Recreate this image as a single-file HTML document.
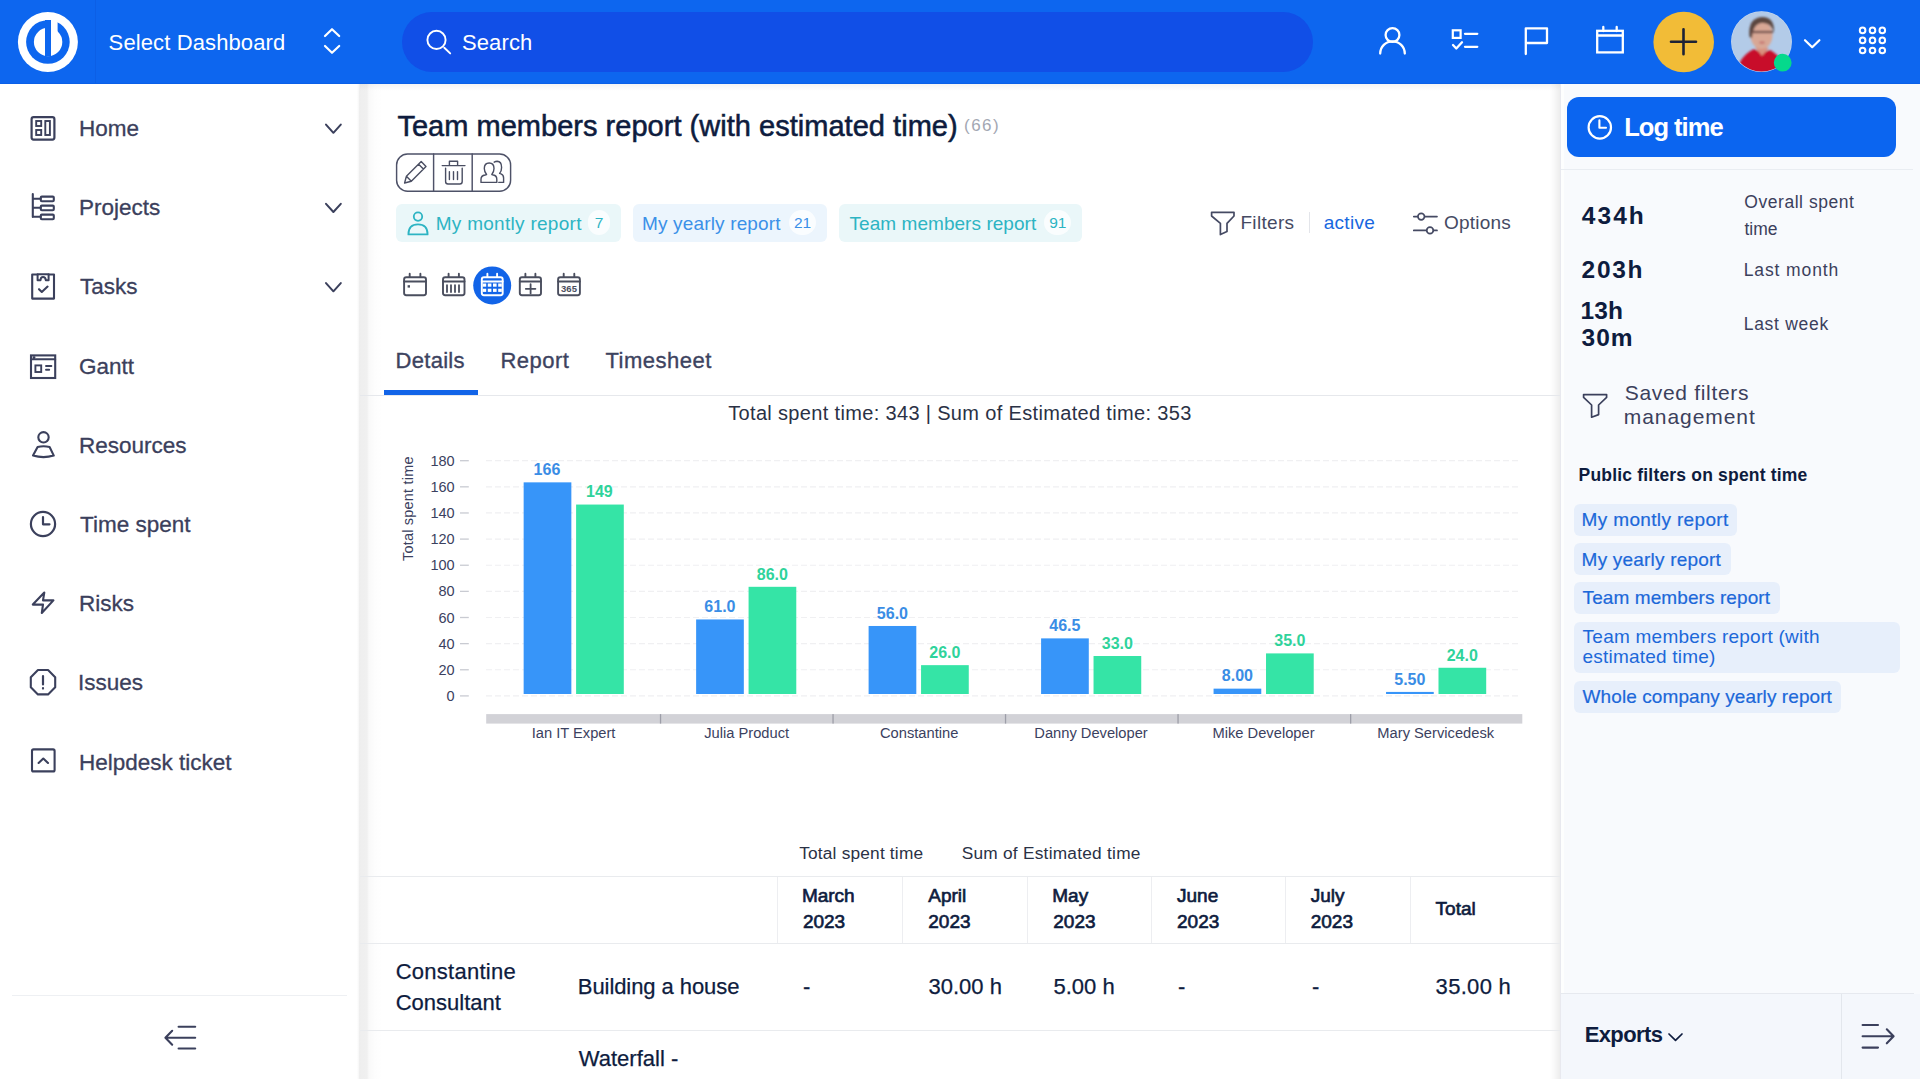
<!DOCTYPE html>
<html><head><meta charset="utf-8"><title>Team members report</title>
<style>
html,body{margin:0;padding:0;width:1920px;height:1079px;overflow:hidden;background:#fff;font-family:"Liberation Sans",sans-serif;}
.t{position:absolute;white-space:nowrap;}
svg{overflow:visible}
</style></head><body>
<div style="position:absolute;left:0px;top:0px;width:1920px;height:84px;background:#0D66EF;"></div>
<div style="position:absolute;left:0px;top:83px;width:1920px;height:1px;background:#0A60E8;"></div>
<div style="position:absolute;left:95px;top:0px;width:1px;height:83px;background:#0C5FE6;"></div>
<div style="position:absolute;left:402px;top:12px;width:911px;height:60px;background:#114FE7;border-radius:30px;"></div>
<div style="position:absolute;left:357px;top:84px;width:2px;height:995px;background:linear-gradient(90deg,rgba(0,0,0,0),rgba(0,0,0,0.04));"></div>
<div style="position:absolute;left:359px;top:84px;width:24px;height:995px;background:linear-gradient(90deg,rgba(0,0,0,0.065) 0px,rgba(0,0,0,0.058) 8px,rgba(0,0,0,0.025) 10px,rgba(0,0,0,0.008) 16px,rgba(0,0,0,0) 24px);"></div>
<div style="position:absolute;left:360px;top:84px;width:1200px;height:7px;background:linear-gradient(180deg,rgba(0,0,0,0.045),rgba(0,0,0,0));"></div>
<div style="position:absolute;left:1560px;top:84px;width:360px;height:995px;background:#F8FAFD;"></div>
<div style="position:absolute;left:1550px;top:84px;width:10px;height:995px;background:linear-gradient(90deg,rgba(0,0,0,0),rgba(0,0,0,0.025) 40%,rgba(0,0,0,0.07));"></div>
<div style="position:absolute;left:1560px;top:84px;width:1px;height:995px;background:#E8E9EF;"></div>
<div style="position:absolute;left:1561px;top:84px;width:3px;height:995px;background:#FDFEFE;"></div>
<div style="position:absolute;left:1561px;top:169px;width:352px;height:1px;background:#E9EDF2;"></div>
<div style="position:absolute;left:1561px;top:994px;width:359px;height:85px;background:#F4F7FC;"></div>
<div style="position:absolute;left:1561px;top:993px;width:353px;height:1px;background:#E6E9EF;"></div>
<div style="position:absolute;left:1841px;top:994px;width:1px;height:85px;background:#E3E7ED;"></div>
<div style="position:absolute;left:12px;top:995px;width:335px;height:1px;background:#EEF0F3;"></div>
<div style="position:absolute;left:360px;top:395px;width:1200px;height:1px;background:#E6E8EC;"></div>
<div style="position:absolute;left:384px;top:390px;width:94px;height:5px;background:#1264E8;"></div>
<div style="position:absolute;left:396px;top:204px;width:225px;height:38px;background:#EAF7F9;border-radius:6px;"></div>
<div style="position:absolute;left:633px;top:204px;width:194px;height:38px;background:#ECF5FD;border-radius:6px;"></div>
<div style="position:absolute;left:839px;top:204px;width:243px;height:38px;background:#EAF7F9;border-radius:6px;"></div>
<div style="position:absolute;left:587.7px;top:210px;width:22px;height:25px;border-radius:13px;background:rgba(255,255,255,0.75);"></div>
<div style="position:absolute;left:788.5px;top:210px;width:27px;height:25px;border-radius:13px;background:rgba(255,255,255,0.75);"></div>
<div style="position:absolute;left:1044.0px;top:210px;width:27px;height:25px;border-radius:13px;background:rgba(255,255,255,0.75);"></div>
<div style="position:absolute;left:1309px;top:212px;width:1px;height:21px;background:#E3E5EA;"></div>
<div style="position:absolute;left:1567px;top:97px;width:329px;height:60px;background:#0B65F0;border-radius:12px;"></div>
<div style="position:absolute;left:1573.5px;top:503.6px;width:163.3px;height:32px;background:#E7EFFB;border-radius:6px;"></div>
<div style="position:absolute;left:1573.5px;top:542.9px;width:157.2px;height:32px;background:#E7EFFB;border-radius:6px;"></div>
<div style="position:absolute;left:1573.5px;top:581.5px;width:206.3px;height:32px;background:#E7EFFB;border-radius:6px;"></div>
<div style="position:absolute;left:1573.5px;top:621.5px;width:326px;height:51.5px;background:#E7EFFB;border-radius:6px;"></div>
<div style="position:absolute;left:1573.5px;top:681px;width:267.7px;height:31.5px;background:#E7EFFB;border-radius:6px;"></div>
<div style="position:absolute;left:360px;top:876px;width:1200px;height:1px;background:#E9EBEE;"></div>
<div style="position:absolute;left:360px;top:943px;width:1200px;height:1px;background:#E9EBEE;"></div>
<div style="position:absolute;left:360px;top:1030px;width:1200px;height:1px;background:#E9EBEE;"></div>
<div style="position:absolute;left:777px;top:877px;width:1px;height:66px;background:#EDEEF1;"></div>
<div style="position:absolute;left:902px;top:877px;width:1px;height:66px;background:#EDEEF1;"></div>
<div style="position:absolute;left:1027px;top:877px;width:1px;height:66px;background:#EDEEF1;"></div>
<div style="position:absolute;left:1151px;top:877px;width:1px;height:66px;background:#EDEEF1;"></div>
<div style="position:absolute;left:1285px;top:877px;width:1px;height:66px;background:#EDEEF1;"></div>
<div style="position:absolute;left:1410px;top:877px;width:1px;height:66px;background:#EDEEF1;"></div>
<div class="t" style="left:412.8px;top:547.6px;font-size:14.5px;line-height:16px;color:#3B4160;transform-origin:0 13px;transform:rotate(-90deg);letter-spacing:0.2px">Total spent time</div>
<svg style="position:absolute;left:0;top:0" width="1920" height="1079"><circle cx="47.9" cy="42" r="30" fill="#fff"/><circle cx="47.9" cy="42" r="21.8" fill="#0D66EF"/><circle cx="48.1" cy="42" r="14.2" fill="#fff"/><rect x="45" y="20" width="6" height="36.5" fill="#0D66EF"/><rect x="51" y="17" width="6.6" height="16" fill="#fff"/><path d="M325 36 L332 29.2 L339.2 36 M325 46 L332 52.8 L339.2 46" fill="none" stroke="#FFFFFF" stroke-width="2.2" stroke-linecap="round" stroke-linejoin="round" /><circle cx="436.5" cy="39.9" r="9.1" fill="none" stroke="#FFFFFF" stroke-width="1.9"/><path d="M444.3 47.7 L450.2 53.4" fill="none" stroke="#FFFFFF" stroke-width="1.9" stroke-linecap="round" stroke-linejoin="round" /><circle cx="1392.5" cy="35" r="6.9" fill="none" stroke="#FFFFFF" stroke-width="2.3"/><path d="M1380.2 53.6 A12.3 12.3 0 0 1 1404.8 53.6" fill="none" stroke="#FFFFFF" stroke-width="2.3" stroke-linecap="round" stroke-linejoin="round" /><rect x="1452.8" y="30.3" width="7.8" height="7.6" fill="none" stroke="#fff" stroke-width="2.2"/><path d="M1465 33.8 H1477.3 M1465 46.8 H1477.3 M1453 45 L1456.3 48.5 L1462 42.3" fill="none" stroke="#FFFFFF" stroke-width="2.3" stroke-linecap="round" stroke-linejoin="round" /><path d="M1525.8 54 V28.3 H1547 V43 H1526.5" fill="none" stroke="#FFFFFF" stroke-width="2.3" stroke-linecap="round" stroke-linejoin="round" stroke-linecap="butt"/><rect x="1597.2" y="30.8" width="25.6" height="21.6" fill="none" stroke="#fff" stroke-width="2.3"/><path d="M1597.2 35.5 H1622.8 M1603.3 27 V31 M1616.7 27 V31" fill="none" stroke="#FFFFFF" stroke-width="2.3" stroke-linecap="round" stroke-linejoin="round" stroke-linecap="butt"/><circle cx="1683.7" cy="42" r="30.3" fill="#F2BC37" stroke="none" stroke-width="0"/><path d="M1671 41.8 H1696 M1683.5 29.2 V54.2" fill="none" stroke="#1D2236" stroke-width="2.6" stroke-linecap="round" stroke-linejoin="round" stroke-linecap="butt"/><defs><clipPath id="av"><circle cx="1761.5" cy="41.7" r="29.9"/></clipPath><filter id="bl" x="-20%" y="-20%" width="140%" height="140%"><feGaussianBlur stdDeviation="1.1"/></filter></defs><circle cx="1761.5" cy="41.7" r="30.4" fill="#C9DAF0"/><g clip-path="url(#av)"><rect x="1730" y="10" width="64" height="64" fill="#B3CBE8"/><g filter="url(#bl)"><path d="M1738 76 L1740 62 Q1745 53 1754 49 L1762 53 L1770 50 Q1778 54 1784 64 L1786 76 Z" fill="#C8102A"/><path d="M1755 47 L1762 56 L1769 48 Z" fill="#D9907E"/><ellipse cx="1761.5" cy="35" rx="11" ry="14" fill="#D8A795"/><path d="M1749.5 37 Q1747.5 18 1762 17 Q1775 17 1774 33 Q1771 22 1762 23 Q1753 23.5 1752 38 Z" fill="#5B4740"/><path d="M1751 32 H1773" stroke="#6B4A45" stroke-width="2.2"/><ellipse cx="1762" cy="42.5" rx="3" ry="1.6" fill="#C97F78"/></g></g><circle cx="1782.7" cy="62.7" r="8.9" fill="#05D98C" stroke="none" stroke-width="0"/><path d="M1805 40.2 L1812.2 47.2 L1819.4 40.2" fill="none" stroke="#FFFFFF" stroke-width="2.2" stroke-linecap="round" stroke-linejoin="round" /><circle cx="1862.6" cy="30.4" r="2.8" fill="none" stroke="#FFFFFF" stroke-width="2.0"/><circle cx="1862.6" cy="40.4" r="2.8" fill="none" stroke="#FFFFFF" stroke-width="2.0"/><circle cx="1862.6" cy="50.5" r="2.8" fill="none" stroke="#FFFFFF" stroke-width="2.0"/><circle cx="1872.5" cy="30.4" r="2.8" fill="none" stroke="#FFFFFF" stroke-width="2.0"/><circle cx="1872.5" cy="40.4" r="2.8" fill="none" stroke="#FFFFFF" stroke-width="2.0"/><circle cx="1872.5" cy="50.5" r="2.8" fill="none" stroke="#FFFFFF" stroke-width="2.0"/><circle cx="1882.3" cy="30.4" r="2.8" fill="none" stroke="#FFFFFF" stroke-width="2.0"/><circle cx="1882.3" cy="40.4" r="2.8" fill="none" stroke="#FFFFFF" stroke-width="2.0"/><circle cx="1882.3" cy="50.5" r="2.8" fill="none" stroke="#FFFFFF" stroke-width="2.0"/><rect x="31.6" y="117.2" width="22.8" height="22.4" rx="2" fill="none" stroke="#3B405C" stroke-width="2.2"/><rect x="36.2" y="121" width="5" height="5" fill="none" stroke="#3B405C" stroke-width="1.9"/><rect x="36.2" y="130" width="5" height="5" fill="none" stroke="#3B405C" stroke-width="1.9"/><rect x="45.3" y="121" width="4.6" height="14" fill="none" stroke="#3B405C" stroke-width="1.9"/><path d="M32.8 194 V217 M32.8 198.8 H40.5 M32.8 207.8 H40.5 M32.8 216.8 H40.5" fill="none" stroke="#3B405C" stroke-width="2.1" stroke-linecap="round" stroke-linejoin="round" stroke-linecap="butt"/><rect x="40.8" y="196.6" width="13" height="4.599999999999994" rx="1" fill="none" stroke="#3B405C" stroke-width="2.1"/><rect x="40.8" y="205.6" width="13" height="4.599999999999994" rx="1" fill="none" stroke="#3B405C" stroke-width="2.1"/><rect x="40.8" y="214.6" width="13" height="4.599999999999994" rx="1" fill="none" stroke="#3B405C" stroke-width="2.1"/><path d="M37.5 274.5 H32.2 V298.6 H54 V274.5 H48.7" fill="none" stroke="#3B405C" stroke-width="2.1" stroke-linecap="round" stroke-linejoin="round" /><path d="M37.6 274.3 V280.2 H40.5 Q40.7 277 43 277 Q45.5 277 45.8 280.2 H48.6 V274.3 Z" fill="none" stroke="#3B405C" stroke-width="2" stroke-linecap="round" stroke-linejoin="round" /><path d="M39 289.2 L41.8 292 L47.6 286.6" fill="none" stroke="#3B405C" stroke-width="2.1" stroke-linecap="round" stroke-linejoin="round" /><rect x="31" y="355.4" width="24.2" height="22.6" fill="none" stroke="#3B405C" stroke-width="2.1"/><path d="M31 359.2 H55.2 M33.5 357.3 H34.5" fill="none" stroke="#3B405C" stroke-width="2" stroke-linecap="round" stroke-linejoin="round" /><rect x="35.4" y="365.4" width="5.8" height="6.6" fill="none" stroke="#3B405C" stroke-width="1.9"/><path d="M46 366 H51.4 M46 369.8 H49.2" fill="none" stroke="#3B405C" stroke-width="1.9" stroke-linecap="round" stroke-linejoin="round" /><circle cx="43.5" cy="437.3" r="5.2" fill="none" stroke="#3B405C" stroke-width="2.1"/><path d="M37.6 447 Q43.5 445.4 49.6 447 L53.8 455.6 Q43.5 458.6 33 455.6 Z" fill="none" stroke="#3B405C" stroke-width="2.1" stroke-linecap="round" stroke-linejoin="round" /><circle cx="43" cy="524" r="12.1" fill="none" stroke="#3B405C" stroke-width="2.2"/><path d="M43 517 V524.3 H49.5" fill="none" stroke="#3B405C" stroke-width="2.2" stroke-linecap="round" stroke-linejoin="round" /><path d="M44.3 592.6 L43 600.4 L53.4 600.4 L41.8 613 L43 604.6 L32.8 604.6 Z" fill="none" stroke="#3B405C" stroke-width="2.1" stroke-linecap="round" stroke-linejoin="round" /><path d="M55.20 687.25 L48.05 694.40 L37.95 694.40 L30.80 687.25 L30.80 677.15 L37.95 670.00 L48.05 670.00 L55.20 677.15 Z" fill="none" stroke="#3B405C" stroke-width="2.1" stroke-linecap="round" stroke-linejoin="round" /><path d="M43 676 V684.5 M43 688.2 V688.6" fill="none" stroke="#3B405C" stroke-width="2.2" stroke-linecap="round" stroke-linejoin="round" /><rect x="32" y="749.4" width="22.6" height="22" rx="1.5" fill="none" stroke="#3B405C" stroke-width="2.1"/><path d="M38.6 763 L43.3 758.5 L48 763" fill="none" stroke="#3B405C" stroke-width="2.1" stroke-linecap="round" stroke-linejoin="round" /><path d="M326 124.60000000000001 L333.4 132.8 L340.8 124.60000000000001" fill="none" stroke="#3B405C" stroke-width="2" stroke-linecap="round" stroke-linejoin="round" /><path d="M326 203.8 L333.4 212 L340.8 203.8" fill="none" stroke="#3B405C" stroke-width="2" stroke-linecap="round" stroke-linejoin="round" /><path d="M326 283.1 L333.4 291.3 L340.8 283.1" fill="none" stroke="#3B405C" stroke-width="2" stroke-linecap="round" stroke-linejoin="round" /><path d="M178.6 1026.8 H195.2 M165.6 1037.8 H195.2 M178.6 1048.5 H195.2 M172.2 1030.8 L165.4 1037.8 L172.2 1044.7" fill="none" stroke="#3B405C" stroke-width="2.1" stroke-linecap="round" stroke-linejoin="round" /><rect x="396.6" y="154" width="114" height="37.3" rx="11" fill="none" stroke="#4E5268" stroke-width="1.45"/><path d="M433.6 154 V191.3 M472.2 154 V191.3" fill="none" stroke="#4E5268" stroke-width="1.45" stroke-linecap="round" stroke-linejoin="round" stroke-linecap="butt"/><path d="M404.6 183 L406.4 176.3 L421.2 161.6 L426 166.4 L411.3 181.2 Z M406.4 176.3 L411.3 181.2 M418.6 164.2 L423.4 169" fill="none" stroke="#4A4E62" stroke-width="1.4" stroke-linecap="round" stroke-linejoin="round" /><path d="M442.2 165.6 H465 M449.4 165.4 V161.3 H457.6 V165.4 M445.6 168.3 V181.5 Q445.6 184 448 184 H459.8 Q462.2 184 462.2 181.5 V168.3 M449.4 171.6 V179.6 M453.5 171.6 V179.6 M457.5 171.6 V179.6" fill="none" stroke="#4A4E62" stroke-width="1.4" stroke-linecap="round" stroke-linejoin="round" stroke-linecap="butt"/><path d="M481 182.4 V179.2 Q481 175.6 485 175 L486.6 174.5 Q484.3 172 484.3 168.6 Q484.3 163 489.2 163 Q494 163 494 168.6 Q494 172 491.8 174.5 L493.4 175 Q496.8 175.6 496.8 179.2 V182.4 Z" fill="none" stroke="#4A4E62" stroke-width="1.4" stroke-linecap="round" stroke-linejoin="round" /><path d="M494.2 162.2 Q495.6 161.3 497.2 161.3 Q501.6 161.5 501.6 167.4 Q501.6 171 499.6 173.4 L501 173.9 Q503.6 174.8 503.6 178 V182.4 H498.8" fill="none" stroke="#4A4E62" stroke-width="1.4" stroke-linecap="round" stroke-linejoin="round" /><circle cx="418" cy="216.6" r="4.2" fill="none" stroke="#2DB4C3" stroke-width="1.8"/><path d="M408.4 234.4 Q408.4 224.4 418 224.4 Q427.6 224.4 427.6 234.4 Z" fill="none" stroke="#2DB4C3" stroke-width="1.8" stroke-linecap="round" stroke-linejoin="round" /><path d="M1211.6 212.3 H1234 V216 L1227 223.4 V231.6 L1220.4 234.6 V223.4 L1211.6 216 Z" fill="none" stroke="#454A63" stroke-width="1.7" stroke-linecap="round" stroke-linejoin="round" /><circle cx="1421.2" cy="216.6" r="3.3" fill="none" stroke="#454A63" stroke-width="1.7"/><circle cx="1430" cy="230.4" r="3.3" fill="none" stroke="#454A63" stroke-width="1.7"/><path d="M1413.8 216.6 H1417.6 M1425 216.6 H1437 M1413.8 230.4 H1426.4 M1433.6 230.4 H1437" fill="none" stroke="#454A63" stroke-width="1.7" stroke-linecap="round" stroke-linejoin="round" /><rect x="404.1" y="277.2" width="21.899999999999977" height="18" rx="2.2" fill="none" stroke="#4A4E5E" stroke-width="1.9"/><path d="M404.1 281.5 H426 M409.70000000000005 273.8 V277 M420.4 273.8 V277" fill="none" stroke="#4A4E5E" stroke-width="1.9" stroke-linecap="round" stroke-linejoin="round" stroke-linecap="butt"/><rect x="407.6" y="285.2" width="2.4" height="2.4" fill="#4A4E5E"/><rect x="443" y="277.2" width="21.5" height="18" rx="2.2" fill="none" stroke="#4A4E5E" stroke-width="1.9"/><path d="M443 281.5 H464.5 M448.6 273.8 V277 M458.9 273.8 V277" fill="none" stroke="#4A4E5E" stroke-width="1.9" stroke-linecap="round" stroke-linejoin="round" stroke-linecap="butt"/><path d="M447 285.2 V292 M451 285.2 V292 M455 285.2 V292 M459 285.2 V292" fill="none" stroke="#4A4E5E" stroke-width="1.8" stroke-linecap="round" stroke-linejoin="round" stroke-linecap="butt"/><circle cx="492.2" cy="285.4" r="19" fill="#1264E8" stroke="none" stroke-width="0"/><rect x="481.8" y="277.2" width="20.899999999999977" height="18" rx="2.2" fill="none" stroke="#FFFFFF" stroke-width="1.9"/><path d="M481.8 281.5 H502.7 M487.40000000000003 273.8 V277 M497.09999999999997 273.8 V277" fill="none" stroke="#FFFFFF" stroke-width="1.9" stroke-linecap="round" stroke-linejoin="round" stroke-linecap="butt"/><rect x="482.6" y="283.5" width="3.6" height="3.2" fill="#fff"/><rect x="482.6" y="288.7" width="3.6" height="3.2" fill="#fff"/><rect x="487.8" y="283.5" width="3.6" height="3.2" fill="#fff"/><rect x="487.8" y="288.7" width="3.6" height="3.2" fill="#fff"/><rect x="493.0" y="283.5" width="3.6" height="3.2" fill="#fff"/><rect x="493.0" y="288.7" width="3.6" height="3.2" fill="#fff"/><rect x="498.2" y="283.5" width="3.6" height="3.2" fill="#fff"/><rect x="498.2" y="288.7" width="3.6" height="3.2" fill="#fff"/><rect x="519.8" y="277.2" width="21.200000000000045" height="18" rx="2.2" fill="none" stroke="#4A4E5E" stroke-width="1.9"/><path d="M519.8 281.5 H541 M525.4 273.8 V277 M535.4 273.8 V277" fill="none" stroke="#4A4E5E" stroke-width="1.9" stroke-linecap="round" stroke-linejoin="round" stroke-linecap="butt"/><path d="M525.8 288.8 H535.4 M530.6 284.2 V293.4" fill="none" stroke="#4A4E5E" stroke-width="1.8" stroke-linecap="round" stroke-linejoin="round" /><rect x="558.1" y="277.2" width="21.799999999999955" height="18" rx="2.2" fill="none" stroke="#4A4E5E" stroke-width="1.9"/><path d="M558.1 281.5 H579.9 M563.7 273.8 V277 M574.3 273.8 V277" fill="none" stroke="#4A4E5E" stroke-width="1.9" stroke-linecap="round" stroke-linejoin="round" stroke-linecap="butt"/><text x="569" y="292" font-family="Liberation Sans" font-weight="700" font-size="9.5" text-anchor="middle" fill="#4A4E5E">365</text><circle cx="1599.8" cy="127.4" r="11.2" fill="none" stroke="#FFFFFF" stroke-width="2.2"/><path d="M1599.4 120.4 V127.8 H1606" fill="none" stroke="#FFFFFF" stroke-width="2.1" stroke-linecap="round" stroke-linejoin="round" /><path d="M1583.6 394.6 H1606.6 V397.4 L1598.6 405 V414.6 L1591.6 417.2 V405 L1583.6 397.4 Z" fill="none" stroke="#3B405C" stroke-width="1.7" stroke-linecap="round" stroke-linejoin="round" /><path d="M1669 1034 L1675.5 1040.4 L1682 1034" fill="none" stroke="#0E1C3E" stroke-width="1.7" stroke-linecap="round" stroke-linejoin="round" /><path d="M1862.6 1025 H1878 M1862.6 1036.3 H1893.4 M1862.6 1047.6 H1878 M1886.8 1029.3 L1893.6 1036.3 L1886.8 1043.3" fill="none" stroke="#3B405C" stroke-width="2.1" stroke-linecap="round" stroke-linejoin="round" /><line x1="486" y1="695.91" x2="1519" y2="695.91" stroke="#F0F0F2" stroke-width="1.2" stroke-dasharray="6 3"/><line x1="460" y1="695.91" x2="468.8" y2="695.91" stroke="#C9CBD2" stroke-width="1.3"/><line x1="486" y1="669.77" x2="1519" y2="669.77" stroke="#F0F0F2" stroke-width="1.2" stroke-dasharray="6 3"/><line x1="460" y1="669.77" x2="468.8" y2="669.77" stroke="#C9CBD2" stroke-width="1.3"/><line x1="486" y1="643.64" x2="1519" y2="643.64" stroke="#F0F0F2" stroke-width="1.2" stroke-dasharray="6 3"/><line x1="460" y1="643.64" x2="468.8" y2="643.64" stroke="#C9CBD2" stroke-width="1.3"/><line x1="486" y1="617.50" x2="1519" y2="617.50" stroke="#F0F0F2" stroke-width="1.2" stroke-dasharray="6 3"/><line x1="460" y1="617.50" x2="468.8" y2="617.50" stroke="#C9CBD2" stroke-width="1.3"/><line x1="486" y1="591.37" x2="1519" y2="591.37" stroke="#F0F0F2" stroke-width="1.2" stroke-dasharray="6 3"/><line x1="460" y1="591.37" x2="468.8" y2="591.37" stroke="#C9CBD2" stroke-width="1.3"/><line x1="486" y1="565.24" x2="1519" y2="565.24" stroke="#F0F0F2" stroke-width="1.2" stroke-dasharray="6 3"/><line x1="460" y1="565.24" x2="468.8" y2="565.24" stroke="#C9CBD2" stroke-width="1.3"/><line x1="486" y1="539.10" x2="1519" y2="539.10" stroke="#F0F0F2" stroke-width="1.2" stroke-dasharray="6 3"/><line x1="460" y1="539.10" x2="468.8" y2="539.10" stroke="#C9CBD2" stroke-width="1.3"/><line x1="486" y1="512.97" x2="1519" y2="512.97" stroke="#F0F0F2" stroke-width="1.2" stroke-dasharray="6 3"/><line x1="460" y1="512.97" x2="468.8" y2="512.97" stroke="#C9CBD2" stroke-width="1.3"/><line x1="486" y1="486.83" x2="1519" y2="486.83" stroke="#F0F0F2" stroke-width="1.2" stroke-dasharray="6 3"/><line x1="460" y1="486.83" x2="468.8" y2="486.83" stroke="#C9CBD2" stroke-width="1.3"/><line x1="486" y1="460.70" x2="1519" y2="460.70" stroke="#F0F0F2" stroke-width="1.2" stroke-dasharray="6 3"/><line x1="460" y1="460.70" x2="468.8" y2="460.70" stroke="#C9CBD2" stroke-width="1.3"/><rect x="523.65" y="482.35" width="47.7" height="211.65" fill="#3795F9"/><rect x="576.10" y="504.55" width="47.7" height="189.45" fill="#35E4A6"/><rect x="696.13" y="619.45" width="47.7" height="74.55" fill="#3795F9"/><rect x="748.58" y="586.81" width="47.7" height="107.19" fill="#35E4A6"/><rect x="868.61" y="625.98" width="47.7" height="68.02" fill="#3795F9"/><rect x="921.06" y="665.15" width="47.7" height="28.85" fill="#35E4A6"/><rect x="1041.09" y="638.38" width="47.7" height="55.62" fill="#3795F9"/><rect x="1093.54" y="656.01" width="47.7" height="37.99" fill="#35E4A6"/><rect x="1213.57" y="688.65" width="47.7" height="5.35" fill="#3795F9"/><rect x="1266.02" y="653.40" width="47.7" height="40.60" fill="#35E4A6"/><rect x="1386.05" y="691.92" width="47.7" height="2.08" fill="#3795F9"/><rect x="1438.50" y="667.76" width="47.7" height="26.24" fill="#35E4A6"/><rect x="486.2" y="714.1" width="1036.1" height="9.5" fill="#D2D2D7"/><rect x="659.90" y="714.1" width="1.3" height="9.5" fill="#9D9EA8"/><rect x="832.40" y="714.1" width="1.3" height="9.5" fill="#9D9EA8"/><rect x="1004.90" y="714.1" width="1.3" height="9.5" fill="#9D9EA8"/><rect x="1177.40" y="714.1" width="1.3" height="9.5" fill="#9D9EA8"/><rect x="1350.00" y="714.1" width="1.3" height="9.5" fill="#9D9EA8"/></svg>
<div class="t" style="left:108.60px;top:29.60px;font-size:22px;line-height:25px;color:#FFFFFF;letter-spacing:0.117px;">Select Dashboard</div>
<div class="t" style="left:462.00px;top:30.00px;font-size:22px;line-height:25px;color:#FFFFFF;letter-spacing:0.106px;">Search</div>
<div class="t" style="left:79.00px;top:115.90px;font-size:22.5px;line-height:25px;color:#3B405C;-webkit-text-stroke:0.3px #3B405C;">Home</div>
<div class="t" style="left:79.00px;top:194.50px;font-size:22.5px;line-height:25px;color:#3B405C;-webkit-text-stroke:0.3px #3B405C;">Projects</div>
<div class="t" style="left:80.00px;top:273.90px;font-size:22.5px;line-height:25px;color:#3B405C;-webkit-text-stroke:0.3px #3B405C;">Tasks</div>
<div class="t" style="left:79.00px;top:353.50px;font-size:22.5px;line-height:25px;color:#3B405C;-webkit-text-stroke:0.3px #3B405C;">Gantt</div>
<div class="t" style="left:79.00px;top:433.00px;font-size:22.5px;line-height:25px;color:#3B405C;-webkit-text-stroke:0.3px #3B405C;">Resources</div>
<div class="t" style="left:80.00px;top:512.00px;font-size:22.5px;line-height:25px;color:#3B405C;-webkit-text-stroke:0.3px #3B405C;">Time spent</div>
<div class="t" style="left:79.00px;top:591.00px;font-size:22.5px;line-height:25px;color:#3B405C;-webkit-text-stroke:0.3px #3B405C;">Risks</div>
<div class="t" style="left:78.00px;top:670.00px;font-size:22.5px;line-height:25px;color:#3B405C;-webkit-text-stroke:0.3px #3B405C;">Issues</div>
<div class="t" style="left:79.00px;top:749.50px;font-size:22.5px;line-height:25px;color:#3B405C;-webkit-text-stroke:0.3px #3B405C;">Helpdesk ticket</div>
<div class="t" style="left:397.40px;top:110.10px;font-size:29px;line-height:32px;color:#0E1C3E;letter-spacing:0.026px;-webkit-text-stroke:0.55px #0E1C3E;">Team members report (with estimated time)</div>
<div class="t" style="left:964.00px;top:116.00px;font-size:17px;line-height:19px;color:#A3A7B3;letter-spacing:1.477px;">(66)</div>
<div class="t" style="left:435.70px;top:212.50px;font-size:19px;line-height:21px;color:#2DB4C3;letter-spacing:0.287px;">My montly report</div>
<div class="t" style="left:642.00px;top:212.50px;font-size:19px;line-height:21px;color:#3B90E8;letter-spacing:0.159px;">My yearly report</div>
<div class="t" style="left:849.50px;top:212.50px;font-size:19px;line-height:21px;color:#2DB4C3;letter-spacing:0.052px;">Team members report</div>
<div class="t" style="left:594.70px;top:213.80px;font-size:15.5px;line-height:17px;color:#2DB4C3;">7</div>
<div class="t" style="left:793.99px;top:213.80px;font-size:15.5px;line-height:17px;color:#3B90E8;">21</div>
<div class="t" style="left:1049.19px;top:213.80px;font-size:15.5px;line-height:17px;color:#2DB4C3;">91</div>
<div class="t" style="left:1240.40px;top:212.00px;font-size:19px;line-height:21px;color:#454A63;letter-spacing:0.330px;">Filters</div>
<div class="t" style="left:1323.70px;top:212.00px;font-size:19px;line-height:21px;color:#1767E0;letter-spacing:0.287px;">active</div>
<div class="t" style="left:1444.00px;top:212.00px;font-size:19px;line-height:21px;color:#454A63;letter-spacing:0.203px;">Options</div>
<div class="t" style="left:395.60px;top:348.00px;font-size:22px;line-height:25px;color:#3D4360;letter-spacing:0.276px;-webkit-text-stroke:0.35px #3D4360;">Details</div>
<div class="t" style="left:500.50px;top:348.00px;font-size:22px;line-height:25px;color:#3D4360;letter-spacing:0.476px;-webkit-text-stroke:0.35px #3D4360;">Report</div>
<div class="t" style="left:605.40px;top:348.00px;font-size:22px;line-height:25px;color:#3D4360;letter-spacing:0.515px;-webkit-text-stroke:0.35px #3D4360;">Timesheet</div>
<div class="t" style="left:1624.20px;top:113.00px;font-size:25.5px;line-height:28px;color:#FFFFFF;font-weight:700;letter-spacing:-0.981px;">Log time</div>
<div class="t" style="left:1581.80px;top:202.30px;font-size:24.5px;line-height:27px;color:#0E1C3E;font-weight:700;letter-spacing:2.041px;">434h</div>
<div class="t" style="left:1744.30px;top:192.30px;font-size:17.5px;line-height:20px;color:#3B405C;letter-spacing:0.547px;">Overall spent</div>
<div class="t" style="left:1744.50px;top:218.70px;font-size:17.5px;line-height:20px;color:#3B405C;">time</div>
<div class="t" style="left:1581.60px;top:256.40px;font-size:24.5px;line-height:27px;color:#0E1C3E;font-weight:700;letter-spacing:1.708px;">203h</div>
<div class="t" style="left:1743.70px;top:259.60px;font-size:17.5px;line-height:20px;color:#3B405C;letter-spacing:0.884px;">Last month</div>
<div class="t" style="left:1580.60px;top:296.75px;font-size:24.5px;line-height:27px;color:#0E1C3E;font-weight:700;letter-spacing:0.024px;">13h</div>
<div class="t" style="left:1581.60px;top:324.00px;font-size:24.5px;line-height:27px;color:#0E1C3E;font-weight:700;letter-spacing:0.974px;">30m</div>
<div class="t" style="left:1743.70px;top:313.60px;font-size:17.5px;line-height:20px;color:#3B405C;letter-spacing:0.720px;">Last week</div>
<div class="t" style="left:1624.70px;top:381.30px;font-size:21px;line-height:23px;color:#3B405C;letter-spacing:0.687px;">Saved filters</div>
<div class="t" style="left:1623.70px;top:404.80px;font-size:21px;line-height:23px;color:#3B405C;letter-spacing:0.951px;">management</div>
<div class="t" style="left:1578.60px;top:464.80px;font-size:17.5px;line-height:20px;color:#0E1C3E;font-weight:700;letter-spacing:0.188px;">Public filters on spent time</div>
<div class="t" style="left:1581.60px;top:508.70px;font-size:19px;line-height:21px;color:#1C68D9;letter-spacing:0.347px;-webkit-text-stroke:0.2px #1C68D9;">My montly report</div>
<div class="t" style="left:1581.60px;top:548.50px;font-size:19px;line-height:21px;color:#1C68D9;letter-spacing:0.205px;-webkit-text-stroke:0.2px #1C68D9;">My yearly report</div>
<div class="t" style="left:1582.60px;top:586.60px;font-size:19px;line-height:21px;color:#1C68D9;letter-spacing:0.086px;-webkit-text-stroke:0.2px #1C68D9;">Team members report</div>
<div class="t" style="left:1582.60px;top:686.00px;font-size:19px;line-height:21px;color:#1C68D9;letter-spacing:0.084px;-webkit-text-stroke:0.2px #1C68D9;">Whole company yearly report</div>
<div class="t" style="left:1582.60px;top:625.90px;font-size:19px;line-height:21px;color:#1C68D9;letter-spacing:0.239px;">Team members report (with</div>
<div class="t" style="left:1582.60px;top:646.20px;font-size:19px;line-height:21px;color:#1C68D9;letter-spacing:0.204px;">estimated time)</div>
<div class="t" style="left:1584.70px;top:1022.30px;font-size:22px;line-height:25px;color:#0E1C3E;font-weight:700;letter-spacing:-0.612px;">Exports</div>
<div class="t" style="left:728.20px;top:401.70px;font-size:20px;line-height:22px;color:#2A3145;letter-spacing:0.339px;">Total spent time: 343 | Sum of Estimated time: 353</div>
<div class="t" style="left:799.20px;top:843.20px;font-size:17.3px;line-height:20px;color:#2A3145;letter-spacing:0.192px;">Total spent time</div>
<div class="t" style="left:961.70px;top:843.20px;font-size:17.3px;line-height:20px;color:#2A3145;letter-spacing:0.244px;">Sum of Estimated time</div>
<div class="t" style="left:801.90px;top:884.90px;font-size:19px;line-height:21px;color:#0E1C3E;-webkit-text-stroke:0.65px #0E1C3E;">March</div>
<div class="t" style="left:802.90px;top:910.50px;font-size:19px;line-height:21px;color:#0E1C3E;-webkit-text-stroke:0.65px #0E1C3E;">2023</div>
<div class="t" style="left:928.30px;top:884.90px;font-size:19px;line-height:21px;color:#0E1C3E;-webkit-text-stroke:0.65px #0E1C3E;">April</div>
<div class="t" style="left:928.30px;top:910.50px;font-size:19px;line-height:21px;color:#0E1C3E;-webkit-text-stroke:0.65px #0E1C3E;">2023</div>
<div class="t" style="left:1052.30px;top:884.90px;font-size:19px;line-height:21px;color:#0E1C3E;-webkit-text-stroke:0.65px #0E1C3E;">May</div>
<div class="t" style="left:1053.30px;top:910.50px;font-size:19px;line-height:21px;color:#0E1C3E;-webkit-text-stroke:0.65px #0E1C3E;">2023</div>
<div class="t" style="left:1177.00px;top:884.90px;font-size:19px;line-height:21px;color:#0E1C3E;-webkit-text-stroke:0.65px #0E1C3E;">June</div>
<div class="t" style="left:1177.00px;top:910.50px;font-size:19px;line-height:21px;color:#0E1C3E;-webkit-text-stroke:0.65px #0E1C3E;">2023</div>
<div class="t" style="left:1310.70px;top:884.90px;font-size:19px;line-height:21px;color:#0E1C3E;-webkit-text-stroke:0.65px #0E1C3E;">July</div>
<div class="t" style="left:1310.70px;top:910.50px;font-size:19px;line-height:21px;color:#0E1C3E;-webkit-text-stroke:0.65px #0E1C3E;">2023</div>
<div class="t" style="left:1435.60px;top:897.90px;font-size:19px;line-height:21px;color:#0E1C3E;-webkit-text-stroke:0.65px #0E1C3E;">Total</div>
<div class="t" style="left:395.70px;top:959.20px;font-size:22px;line-height:25px;color:#0E1C3E;letter-spacing:0.252px;-webkit-text-stroke:0.25px #0E1C3E;">Constantine</div>
<div class="t" style="left:395.70px;top:990.00px;font-size:22px;line-height:25px;color:#0E1C3E;-webkit-text-stroke:0.25px #0E1C3E;">Consultant</div>
<div class="t" style="left:577.80px;top:974.00px;font-size:22px;line-height:25px;color:#0E1C3E;letter-spacing:-0.070px;-webkit-text-stroke:0.25px #0E1C3E;">Building a house</div>
<div class="t" style="left:803.00px;top:974.00px;font-size:22px;line-height:25px;color:#0E1C3E;-webkit-text-stroke:0.25px #0E1C3E;">-</div>
<div class="t" style="left:928.50px;top:974.00px;font-size:22px;line-height:25px;color:#0E1C3E;-webkit-text-stroke:0.25px #0E1C3E;">30.00 h</div>
<div class="t" style="left:1053.50px;top:974.00px;font-size:22px;line-height:25px;color:#0E1C3E;-webkit-text-stroke:0.25px #0E1C3E;">5.00 h</div>
<div class="t" style="left:1178.00px;top:974.00px;font-size:22px;line-height:25px;color:#0E1C3E;-webkit-text-stroke:0.25px #0E1C3E;">-</div>
<div class="t" style="left:1312.00px;top:974.00px;font-size:22px;line-height:25px;color:#0E1C3E;-webkit-text-stroke:0.25px #0E1C3E;">-</div>
<div class="t" style="left:1435.60px;top:974.40px;font-size:22px;line-height:25px;color:#0E1C3E;letter-spacing:0.306px;-webkit-text-stroke:0.25px #0E1C3E;">35.00 h</div>
<div class="t" style="left:578.80px;top:1046.20px;font-size:22px;line-height:25px;color:#0E1C3E;-webkit-text-stroke:0.25px #0E1C3E;">Waterfall -</div>
<div class="t" style="left:446.60px;top:687.91px;font-size:14.5px;line-height:16px;color:#3B4160;">0</div>
<div class="t" style="left:438.54px;top:661.77px;font-size:14.5px;line-height:16px;color:#3B4160;">20</div>
<div class="t" style="left:438.54px;top:635.64px;font-size:14.5px;line-height:16px;color:#3B4160;">40</div>
<div class="t" style="left:438.54px;top:609.50px;font-size:14.5px;line-height:16px;color:#3B4160;">60</div>
<div class="t" style="left:438.54px;top:583.37px;font-size:14.5px;line-height:16px;color:#3B4160;">80</div>
<div class="t" style="left:430.47px;top:557.24px;font-size:14.5px;line-height:16px;color:#3B4160;">100</div>
<div class="t" style="left:430.47px;top:531.10px;font-size:14.5px;line-height:16px;color:#3B4160;">120</div>
<div class="t" style="left:430.47px;top:504.97px;font-size:14.5px;line-height:16px;color:#3B4160;">140</div>
<div class="t" style="left:430.47px;top:478.83px;font-size:14.5px;line-height:16px;color:#3B4160;">160</div>
<div class="t" style="left:430.47px;top:452.70px;font-size:14.5px;line-height:16px;color:#3B4160;">180</div>
<div class="t" style="left:533.60px;top:461.15px;font-size:16px;line-height:17px;color:#3A8DE5;font-weight:700;">166</div>
<div class="t" style="left:586.05px;top:483.35px;font-size:16px;line-height:17px;color:#2FD39B;font-weight:700;">149</div>
<div class="t" style="left:531.65px;top:725.40px;font-size:14.7px;line-height:16px;color:#3B4160;">Ian IT Expert</div>
<div class="t" style="left:704.36px;top:598.25px;font-size:16px;line-height:17px;color:#3A8DE5;font-weight:700;">61.0</div>
<div class="t" style="left:756.81px;top:565.61px;font-size:16px;line-height:17px;color:#2FD39B;font-weight:700;">86.0</div>
<div class="t" style="left:704.22px;top:725.40px;font-size:14.7px;line-height:16px;color:#3B4160;">Julia Product</div>
<div class="t" style="left:876.84px;top:604.78px;font-size:16px;line-height:17px;color:#3A8DE5;font-weight:700;">56.0</div>
<div class="t" style="left:929.29px;top:643.95px;font-size:16px;line-height:17px;color:#2FD39B;font-weight:700;">26.0</div>
<div class="t" style="left:880.00px;top:725.40px;font-size:14.7px;line-height:16px;color:#3B4160;">Constantine</div>
<div class="t" style="left:1049.32px;top:617.18px;font-size:16px;line-height:17px;color:#3A8DE5;font-weight:700;">46.5</div>
<div class="t" style="left:1101.77px;top:634.81px;font-size:16px;line-height:17px;color:#2FD39B;font-weight:700;">33.0</div>
<div class="t" style="left:1034.29px;top:725.40px;font-size:14.7px;line-height:16px;color:#3B4160;">Danny Developer</div>
<div class="t" style="left:1221.80px;top:667.45px;font-size:16px;line-height:17px;color:#3A8DE5;font-weight:700;">8.00</div>
<div class="t" style="left:1274.25px;top:632.20px;font-size:16px;line-height:17px;color:#2FD39B;font-weight:700;">35.0</div>
<div class="t" style="left:1212.50px;top:725.40px;font-size:14.7px;line-height:16px;color:#3B4160;">Mike Developer</div>
<div class="t" style="left:1394.28px;top:670.72px;font-size:16px;line-height:17px;color:#3A8DE5;font-weight:700;">5.50</div>
<div class="t" style="left:1446.73px;top:646.56px;font-size:16px;line-height:17px;color:#2FD39B;font-weight:700;">24.0</div>
<div class="t" style="left:1377.36px;top:725.40px;font-size:14.7px;line-height:16px;color:#3B4160;">Mary Servicedesk</div>
</body></html>
